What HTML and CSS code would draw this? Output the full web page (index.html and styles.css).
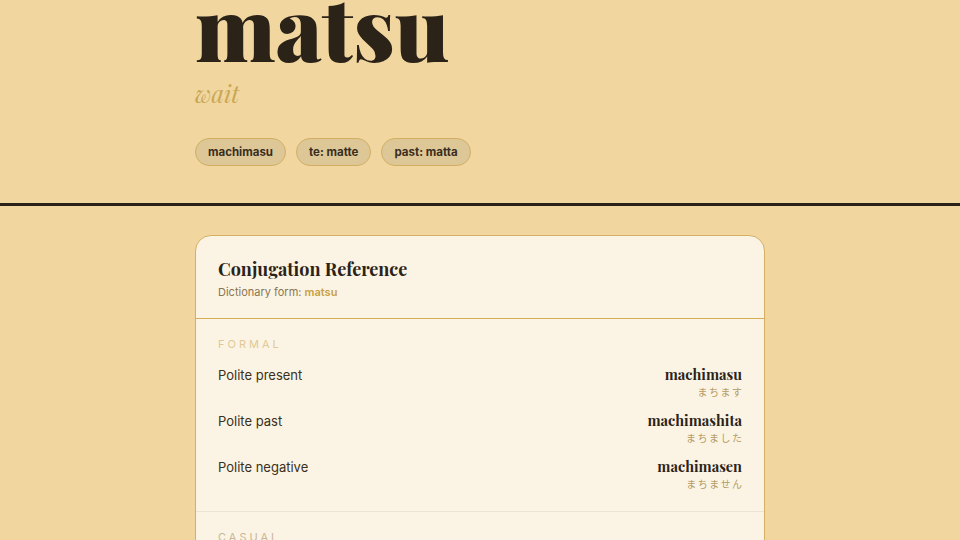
FILE: index.html
```html
<!DOCTYPE html>
<html lang="en">
<head>
<meta charset="utf-8">
<title>matsu</title>
<link rel="stylesheet" href="styles.css">
</head>
<body>
<header class="hero">
  <div class="wrap">
    <h1 class="word">matsu</h1>
    <p class="meaning">wait</p>
    <div class="chips">
      <span class="chip">machimasu</span>
      <span class="chip">te: matte</span>
      <span class="chip">past: matta</span>
    </div>
  </div>
</header>
<main class="wrap main">
  <section class="card">
    <div class="card-head">
      <h2 class="card-title">Conjugation Reference</h2>
      <p class="card-sub">Dictionary form: <span class="dict">matsu</span></p>
    </div>
    <div class="group">
      <div class="group-label">Formal</div>
      <div class="row">
        <span class="row-name">Polite present</span>
        <div class="row-val"><span class="romaji">machimasu</span><span class="kana">まちます</span></div>
      </div>
      <div class="row">
        <span class="row-name">Polite past</span>
        <div class="row-val"><span class="romaji">machimashita</span><span class="kana">まちました</span></div>
      </div>
      <div class="row">
        <span class="row-name">Polite negative</span>
        <div class="row-val"><span class="romaji">machimasen</span><span class="kana">まちません</span></div>
      </div>
    </div>
    <div class="group group-casual">
      <div class="group-label">Casual</div>
      <div class="row">
        <span class="row-name">Plain present</span>
        <div class="row-val"><span class="romaji">matsu</span><span class="kana">まつ</span></div>
      </div>
    </div>
  </section>
</main>
</body>
</html>
```

FILE: styles.css
```css
* { box-sizing: border-box; }
html, body { margin: 0; padding: 0; }
body {
  background: #f1d6a0;
  font-family: Inter, "Noto Sans", "Noto Sans CJK JP", sans-serif;
  color: #2b2318;
  overflow: hidden;
  height: 540px;
}
.wrap {
  width: 570px;
  margin: 0 auto;
}
.hero {
  border-bottom: 3px solid #2a2218;
  padding-bottom: 37px;
}
.word {
  margin: -18px 0 0 0;
  font-family: "Playfair Display", "DejaVu Serif", "Liberation Serif", serif;
  font-weight: 900;
  font-size: 88px;
  line-height: 1;
  letter-spacing: 0;
  color: #2b2318;
}
.meaning {
  margin: 8px 0 0 0;
  font-family: "Playfair Display", "DejaVu Serif", "Liberation Serif", serif;
  font-style: italic;
  font-size: 24px;
  line-height: 30px;
  color: #c9a650;
}
.chips {
  display: flex;
  gap: 10px;
  margin-top: 30px;
}
.chip {
  display: block;
  padding: 6px 12px 5px;
  border: 1px solid #d2ae63;
  border-radius: 999px;
  background: #dec797;
  font-size: 11.5px;
  font-weight: 700;
  line-height: 15px;
  color: #3a2e1e;
}
.main {
  padding-top: 29px;
}
.card {
  background: #fbf4e5;
  border: 1px solid #d6b062;
  border-radius: 16px;
  overflow: hidden;
}
.card-head {
  padding: 20px 22px 18px;
  border-bottom: 1px solid #d4ad55;
}
.card-title {
  margin: 0;
  font-family: "Playfair Display", "DejaVu Serif", "Liberation Serif", serif;
  font-weight: 700;
  font-size: 18px;
  line-height: 26px;
  color: #2b2318;
}
.card-sub {
  margin: 2px 0 0 0;
  font-size: 11px;
  line-height: 16px;
  color: #8b7552;
}
.dict {
  color: #c9a043;
  font-weight: 600;
}
.group {
  padding: 18px 22px 13px;
  border-bottom: 1px solid #ece4d2;
}
.group-label {
  font-size: 11px;
  line-height: 14px;
  letter-spacing: 3px;
  text-transform: uppercase;
  color: #e2c992;
  margin-bottom: 9px;
}
.group-casual .group-label {
  color: #c7b796;
}
.row {
  display: flex;
  justify-content: space-between;
  align-items: flex-start;
  padding: 6px 0;
}
.row-name {
  font-size: 13px;
  line-height: 18px;
  color: #3a3020;
}
.row-val {
  display: flex;
  flex-direction: column;
  align-items: flex-end;
}
.romaji {
  font-family: "Playfair Display", "DejaVu Serif", "Liberation Serif", serif;
  font-weight: 700;
  font-size: 14.5px;
  line-height: 17px;
  color: #2b2318;
}
.kana {
  font-family: "Noto Sans CJK JP", sans-serif;
  font-size: 10px;
  line-height: 17px;
  letter-spacing: 1.5px;
  margin-right: -1.5px;
  color: #b59b63;
}
```
